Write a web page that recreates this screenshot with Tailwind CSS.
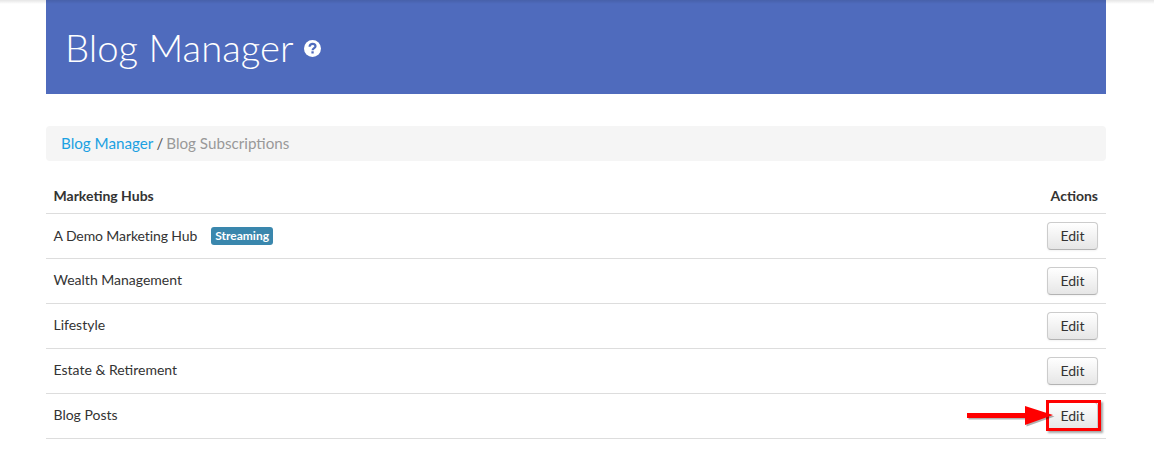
<!DOCTYPE html>
<html lang="en">
<head>
    <meta charset="UTF-8">
    <title>Blog Manager</title>
    <script src="https://cdn.jsdelivr.net/npm/@tailwindcss/browser@4"></script>
</head>
<body class="bg-white font-['Lato',sans-serif] text-[14px] text-[#333] h-[473px] overflow-hidden relative">
    <div class="absolute top-0 left-0 right-0 h-[4px] bg-gradient-to-b from-black/10 to-transparent z-10"></div>
    <div class="mx-[46px] w-[1060px]">
        <div class="h-[94px] bg-[#4f6bbd] flex items-center pl-[19px] text-white">
            <h1 class="text-[38.3px] font-light leading-none">Blog Manager</h1>
            <svg class="w-[17px] h-[17px] ml-[10px] mt-[3px]" viewBox="0 0 17 17">
                <circle cx="8.5" cy="8.5" r="8.5" fill="#fff"/>
                <path d="M5.6 6.700C5.600 4.900 6.900 3.800 8.600 3.800 10.300 3.800 11.500 4.900 11.500 6.300 11.500 8.200 8.600 8.200 8.600 10.300" fill="none" stroke="#4f6bbd" stroke-width="2.2"/>
                <rect x="7.400" y="11.300" width="2.300" height="2.200" fill="#4f6bbd"/>
            </svg>
        </div>

        <div class="mt-[32px] h-[35px] bg-[#f5f5f5] rounded-[4px] pl-[15px] flex items-center text-[15.2px]">
            <a class="text-[#1ba1e2]">Blog Manager</a>
            <span class="mx-[3px] text-[#555]">/</span>
            <span class="text-[#999]">Blog Subscriptions</span>
        </div>

        <div class="mt-[18px]">
            <div class="h-[35px] border-b border-[#ddd] flex items-center justify-between pl-[7.5px] pr-[8px] font-bold">
                <span class="mb-[2px]">Marketing Hubs</span>
                <span class="mb-[2px]">Actions</span>
            </div>
            <div class="h-[45px] border-b border-[#ddd] flex items-center justify-between pl-[7.5px] pr-[8px]">
                <span class="flex items-center mb-[2px]"><span class="tracking-[-0.1px]">A Demo Marketing Hub</span>
                    <span class="ml-[14px] mt-[2px] bg-[#3a87ad] text-white font-bold text-[12px] leading-none rounded-[3px] px-[4px] py-[3px]">Streaming</span>
                </span>
                <button class="w-[51px] h-[28px] pb-[2px] rounded-[4px] border border-[#ccc] border-b-[#b3b3b3] bg-gradient-to-b from-white to-[#e6e6e6] shadow-[0_1px_2px_rgba(0,0,0,0.05)]">Edit</button>
            </div>
            <div class="h-[45px] border-b border-[#ddd] flex items-center justify-between pl-[7.5px] pr-[8px]">
                <span class="mb-[4px]">Wealth Management</span>
                <button class="w-[51px] h-[28px] pb-[2px] rounded-[4px] border border-[#ccc] border-b-[#b3b3b3] bg-gradient-to-b from-white to-[#e6e6e6] shadow-[0_1px_2px_rgba(0,0,0,0.05)]">Edit</button>
            </div>
            <div class="h-[45px] border-b border-[#ddd] flex items-center justify-between pl-[7.5px] pr-[8px]">
                <span class="mb-[4px]">Lifestyle</span>
                <button class="w-[51px] h-[28px] pb-[2px] rounded-[4px] border border-[#ccc] border-b-[#b3b3b3] bg-gradient-to-b from-white to-[#e6e6e6] shadow-[0_1px_2px_rgba(0,0,0,0.05)]">Edit</button>
            </div>
            <div class="h-[45px] border-b border-[#ddd] flex items-center justify-between pl-[7.5px] pr-[8px]">
                <span class="mb-[4px]">Estate &amp; Retirement</span>
                <button class="w-[51px] h-[28px] pb-[2px] rounded-[4px] border border-[#ccc] border-b-[#b3b3b3] bg-gradient-to-b from-white to-[#e6e6e6] shadow-[0_1px_2px_rgba(0,0,0,0.05)]">Edit</button>
            </div>
            <div class="h-[45px] border-b border-[#ddd] flex items-center justify-between pl-[7.5px] pr-[8px]">
                <span class="mb-[4px]">Blog Posts</span>
                <div class="relative">
                    <button class="w-[51px] h-[28px] pb-[2px] rounded-[4px] border border-[#ccc] border-b-[#b3b3b3] bg-gradient-to-b from-white to-[#e6e6e6]">Edit</button>
                    <!-- callout drawn over the button -->
                    <div class="absolute left-[-1px] top-[-2px] w-[55px] h-[31px] border-[3px] border-[#f00] shadow-[2px_2px_2px_rgba(0,0,0,0.35)]"></div>
                    <svg class="absolute left-[-82px] top-[-2px] overflow-visible" width="90" height="32" viewBox="0 0 90 32">
                        <path d="M2 13H60V6L88 15L60 25V18H2Z" fill="#000" opacity="0.3" transform="translate(1.5 1.5)"/>
                        <path d="M2 13H60V6L88 15L60 25V18H2Z" fill="#f00"/>
                    </svg>
                </div>
            </div>
        </div>
    </div>
</body>
</html>
